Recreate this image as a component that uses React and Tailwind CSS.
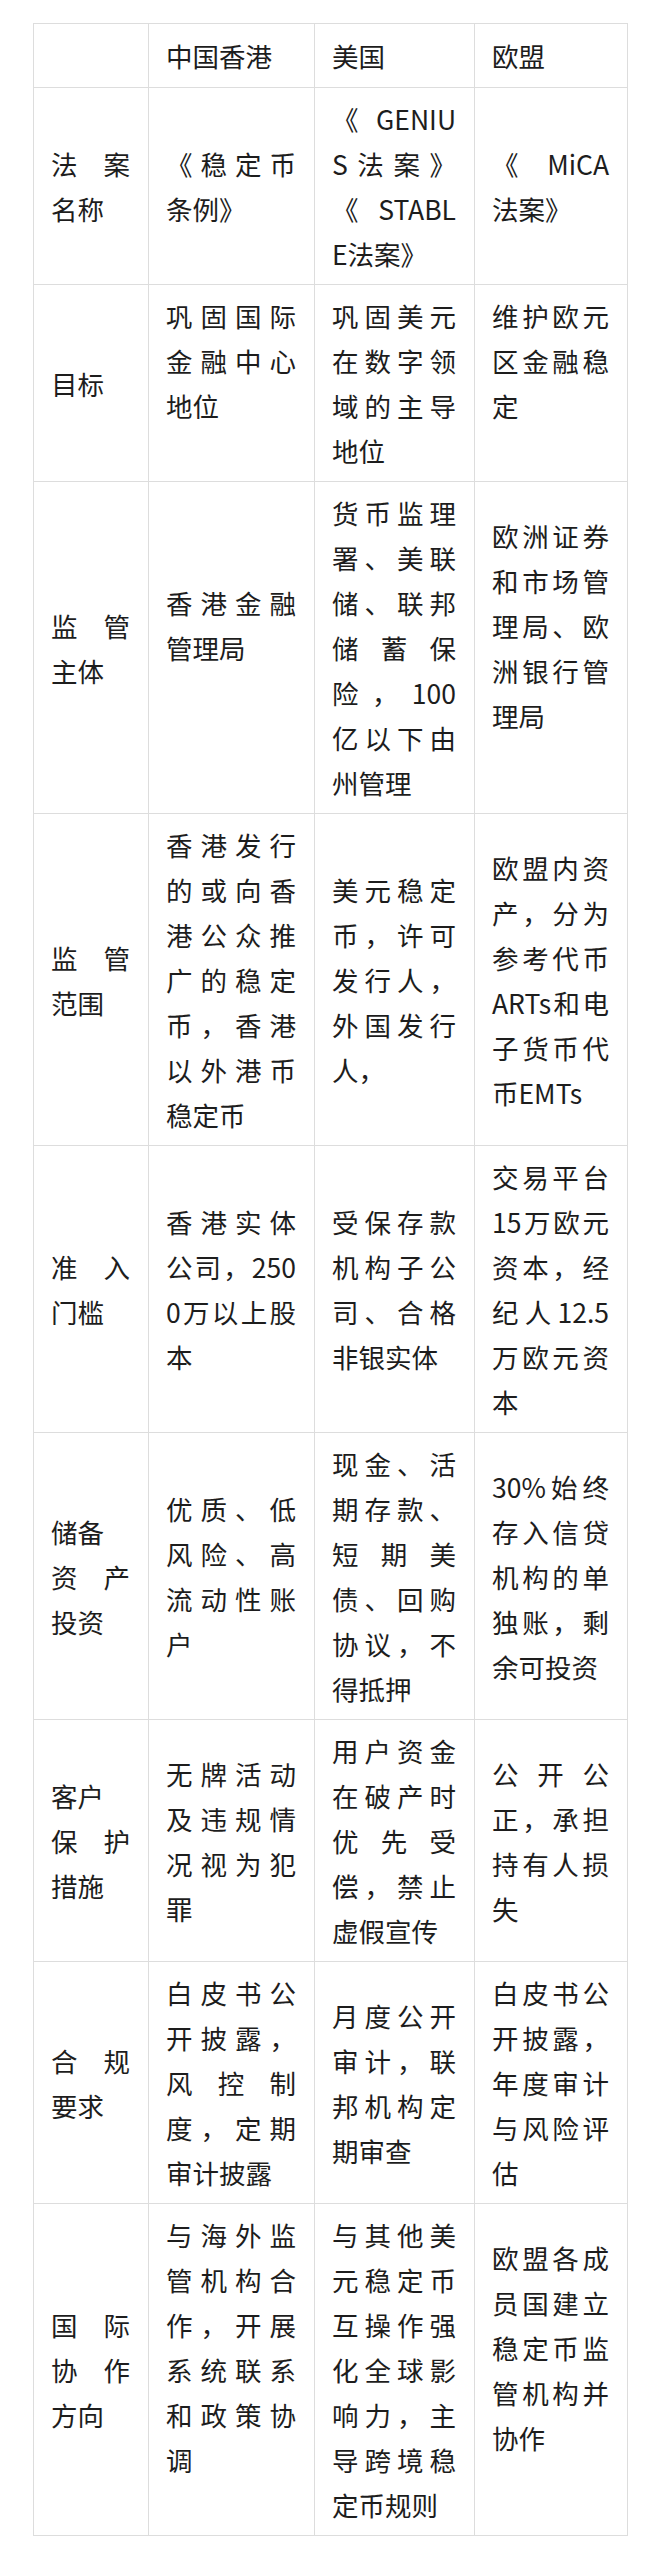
const header = ["", "中国香港", "美国", "欧盟"];

// each cell: list of paragraphs, "/" marks a line break inside a paragraph
// (all lines but the last of a paragraph are justified). "" = blank line.
const rows = [
  {
    label: ["法案/名称"],
    cells: [["《稳定币/条例》"], ["《GENIU/S法案》/《STABL/E法案》"], ["《MiCA/法案》"]],
  },
  {
    label: ["目标"],
    cells: [["巩固国际/金融中心/地位", ""], ["巩固美元/在数字领/域的主导/地位"], ["维护欧元/区金融稳/定", ""]],
  },
  {
    label: ["监管/主体"],
    cells: [
      ["香港金融/管理局", ""],
      ["货币监理/署、美联/储、联邦/储蓄保/险，100/亿以下由/州管理"],
      ["欧洲证券/和市场管/理局、欧/洲银行管/理局", ""],
    ],
  },
  {
    label: ["监管/范围"],
    cells: [
      ["香港发行/的或向香/港公众推/广的稳定/币，香港/以外港币/稳定币"],
      ["美元稳定/币，许可/发行人，/外国发行/人，"],
      ["欧盟内资/产，分为/参考代币/ARTs和电/子货币代/币EMTs"],
    ],
  },
  {
    label: ["准入/门槛"],
    cells: [
      ["香港实体/公司，250/0万以上股/本"],
      ["受保存款/机构子公/司、合格/非银实体"],
      ["交易平台/15万欧元/资本，经/纪人12.5/万欧元资/本"],
    ],
  },
  {
    label: ["储备", "资产/投资"],
    cells: [
      ["优质、低/风险、高/流动性账/户"],
      ["现金、活/期存款、/短期美/债、回购/协议，不/得抵押"],
      ["30%始终/存入信贷/机构的单/独账，剩/余可投资"],
    ],
  },
  {
    label: ["客户", "保护/措施"],
    cells: [
      ["无牌活动/及违规情/况视为犯/罪"],
      ["用户资金/在破产时/优先受/偿，禁止/虚假宣传"],
      ["公开公/正，承担/持有人损/失"],
    ],
  },
  {
    label: ["合规/要求"],
    cells: [
      ["白皮书公/开披露，/风控制/度，定期/审计披露"],
      ["月度公开/审计，联/邦机构定/期审查"],
      ["白皮书公/开披露，/年度审计/与风险评/估"],
    ],
  },
  {
    label: ["国际/协作/方向"],
    cells: [
      ["与海外监/管机构合/作，开展/系统联系/和政策协/调", ""],
      ["与其他美/元稳定币/互操作强/化全球影/响力，主/导跨境稳/定币规则"],
      ["欧盟各成/员国建立/稳定币监/管机构并/协作", ""],
    ],
  },
];

function CellText({ paras }) {
  return paras.map((para, i) => {
    if (para === "") return <div key={i} className="h-[45px]" />;
    const lines = para.split("/");
    return lines.map((line, j) => (
      <div
        key={i + "-" + j}
        className={j < lines.length - 1 ? "text-justify [text-align-last:justify]" : "text-left"}
      >
        {line}
      </div>
    ));
  });
}

const cellCls = "border border-[#dddddd] pl-[17px] pr-[18px] align-middle";

export default function App() {
  return (
    <div className="bg-white pt-[23px] pb-[24px] font-['Noto_Sans_CJK_SC',sans-serif] text-[26.5px] leading-[45px] text-[#1d1d1d]">
      <table className="ml-[33px] w-[594px] table-fixed border-collapse">
        <colgroup>
          <col className="w-[115px]" />
          <col className="w-[166px]" />
          <col className="w-[160px]" />
          <col className="w-[153px]" />
        </colgroup>
        <thead>
          <tr>
            {header.map((h, i) => (
              <th key={i} className={cellCls + " py-[9px] text-left font-normal"}>
                {h}
              </th>
            ))}
          </tr>
        </thead>
        <tbody>
          {rows.map((row, i) => (
            <tr key={i}>
              <td className={cellCls + " py-2"}>
                <CellText paras={row.label} />
              </td>
              {row.cells.map((c, j) => (
                <td key={j} className={cellCls + " py-2"}>
                  <CellText paras={c} />
                </td>
              ))}
            </tr>
          ))}
        </tbody>
      </table>
    </div>
  );
}
